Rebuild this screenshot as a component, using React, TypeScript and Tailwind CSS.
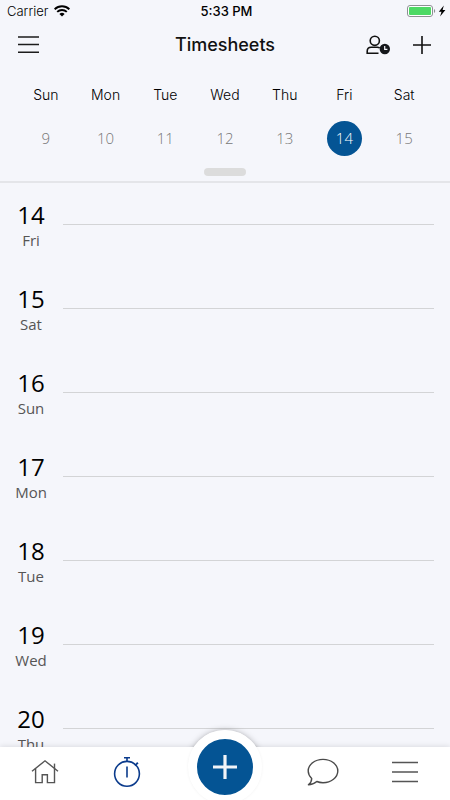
import { useState } from 'react'
import clsx from 'clsx'

const weekDays = [
  { name: 'Sun', date: 9 },
  { name: 'Mon', date: 10 },
  { name: 'Tue', date: 11 },
  { name: 'Wed', date: 12 },
  { name: 'Thu', date: 13 },
  { name: 'Fri', date: 14 },
  { name: 'Sat', date: 15 },
]

const agendaDays = [
  { name: 'Fri', date: 14 },
  { name: 'Sat', date: 15 },
  { name: 'Sun', date: 16 },
  { name: 'Mon', date: 17 },
  { name: 'Tue', date: 18 },
  { name: 'Wed', date: 19 },
  { name: 'Thu', date: 20 },
]

function StatusBar() {
  return (
    <div className="grid h-[22px] grid-cols-3 items-center pr-1 pl-[7px] text-[13px] leading-4 text-black">
      <div className="flex items-center gap-1.5">
        <span className="font-light">Carrier</span>
        <svg viewBox="0 0 16 12" className="h-3 w-4" aria-hidden="true">
          <path d="M.6 4.2a10.6 10.6 0 0 1 14.8 0" fill="none" stroke="#000" strokeWidth="2" />
          <path d="M3.2 6.9a6.9 6.9 0 0 1 9.6 0" fill="none" stroke="#000" strokeWidth="1.9" />
          <path d="M8 11.6 5.4 9a3.7 3.7 0 0 1 5.2 0z" fill="#000" />
        </svg>
      </div>
      <span className="text-center font-medium">5:33 PM</span>
      <div className="flex items-center justify-end gap-0.5">
        <svg viewBox="0 0 29 12" className="h-3 w-[29px]" aria-hidden="true">
          <rect x=".5" y=".5" width="25" height="11" rx="2.5" fill="#fff" stroke="#8d8f93" />
          <rect x="2" y="2" width="22" height="8" rx="1" fill="#4cd964" />
          <path d="M27 4c1.6.6 1.6 3.4 0 4z" fill="#8d8f93" />
        </svg>
        <svg viewBox="0 0 8 12" className="h-3 w-2" aria-hidden="true">
          <path d="M5.8.4.8 6.8h2.7L2.1 11.6 7.4 5H4.6z" fill="#000" />
        </svg>
      </div>
    </div>
  )
}

function PersonClockIcon() {
  return (
    <svg viewBox="0 0 24 20" className="h-5 w-6" fill="none" aria-hidden="true">
      <circle cx="8.8" cy="5.8" r="4.6" stroke="#111" strokeWidth="1.6" />
      <path
        d="M12.5 18.3H1.2v-2c0-2.6 1.500-4.100 3.900-4.100h6.200c1 0 1.800.2 2.400.7"
        stroke="#111"
        strokeWidth="1.6"
      />
      <circle cx="18.8" cy="14" r="5.2" fill="#15171b" />
      <path d="M18.7 11v3.3h2.7" stroke="#f5f6fb" strokeWidth="1.2" />
    </svg>
  )
}

function HomeIcon() {
  return (
    <svg viewBox="0 0 28 26" className="h-[26px] w-7" fill="none" stroke="#555" strokeWidth="1.4" aria-hidden="true">
      <path d="M1 12.3 14 1.8l13 10.5" />
      <path d="M4.6 9.600v14h6.600v-7.800h5.200v7.800h7.100V9.400" />
      <path d="M23.500 9.400V4.600" />
    </svg>
  )
}

function StopwatchIcon() {
  return (
    <svg viewBox="0 0 28 32" className="h-8 w-7" fill="none" stroke="#0b3b8c" strokeWidth="1.6" aria-hidden="true">
      <circle cx="14" cy="17.8" r="12.4" />
      <path d="M14 10.500v11M11 1.800h6M14 2v3.400M22 9.600l2.600-2.600M23.600 6.600l1.400 1.400" />
    </svg>
  )
}

function ChatIcon() {
  return (
    <svg viewBox="0 0 32 28" className="h-7 w-8" fill="none" stroke="#4a4a4a" strokeWidth="1.4" strokeLinejoin="round" aria-hidden="true">
      <path d="M4.700 20.400C2.500 18.300 1.200 15.800 1.200 13 1.200 6.600 7.800 1.400 16 1.400S30.800 6.600 30.800 13 24.200 24.700 16 24.700c-2.200 0-4.300-.4-6.200-1.200-2.600 2.200-5.200 3.200-8.400 3.200 2-1.600 3.300-3.600 3.300-6.300z" />
    </svg>
  )
}

export default function App() {
  const [selectedDate, setSelectedDate] = useState(14)

  return (
    <div className="flex h-screen flex-col overflow-hidden bg-[#f5f6fb] font-['Inter',sans-serif]">
      <header className="shrink-0 border-b-2 border-[#e4e5e9]">
        <StatusBar />
        <div className="grid h-[46px] grid-cols-3 items-center px-4">
          <button type="button" aria-label="Open menu" className="flex h-6 w-6 items-center justify-center">
            <svg viewBox="0 0 22 18" className="h-[18px] w-[22px]" stroke="#1c1c1c" strokeWidth="1.5" aria-hidden="true">
              <path d="M1 1h21M1 8.5h21M1 16.200h21" />
            </svg>
          </button>
          <h1 className="text-center text-lg font-medium text-[#111]">Timesheets</h1>
          <div className="flex items-center justify-end gap-5">
            <button type="button" aria-label="Approvals">
              <PersonClockIcon />
            </button>
            <button type="button" aria-label="Add timesheet" className="flex h-6 w-6 items-center justify-center">
              <svg viewBox="0 0 18 18" className="h-[18px] w-[18px]" stroke="#111" strokeWidth="1.6" aria-hidden="true">
                <path d="M9 0v18M0 9h18" />
              </svg>
            </button>
          </div>
        </div>

        <div className="grid grid-cols-7 px-4 pt-[17px]">
          {weekDays.map((day) => (
            <button
              key={day.date}
              type="button"
              aria-pressed={selectedDate === day.date}
              onClick={() => setSelectedDate(day.date)}
              className="flex flex-col items-center gap-4"
            >
              <span className="text-sm leading-5 font-light text-black">{day.name}</span>
              <span
                className={clsx(
                  "flex h-[35px] w-[35px] items-center justify-center rounded-full font-['Open_Sans',sans-serif] text-[15px] font-light",
                  selectedDate === day.date ? 'bg-[#045494] text-white' : 'text-[#777]',
                )}
              >
                {day.date}
              </span>
            </button>
          ))}
        </div>
        <div className="flex justify-center pt-3 pb-[5px]">
          <span className="h-2 w-[42px] rounded-full bg-[#dcdcdc]" />
        </div>
      </header>

      <main className="min-h-0 flex-1 overflow-y-auto pt-[17px] font-['Open_Sans',sans-serif] [scrollbar-width:none]">
        {agendaDays.map((day) => (
          <section key={day.date} className="flex h-[84px] px-4">
            <div className="flex w-[30px] flex-col items-center">
              <span className="text-2xl leading-[30px] text-black">{day.date}</span>
              <span className="text-[15px] leading-5 text-[#555]">{day.name}</span>
            </div>
            <div className="mt-6 ml-[17px] flex-1 border-t border-[#d3d4d6]" />
          </section>
        ))}
      </main>

      <nav className="relative flex h-[53px] shrink-0 px-1 shadow-[0_-1px_5px_rgba(0,0,0,0.10)]">
        <span className="absolute -top-[17px] left-1/2 h-[74px] w-[74px] -translate-x-1/2 rounded-full shadow-[0_0_6px_rgba(0,0,0,0.25)]" />
        <span className="absolute inset-0 bg-white" />
        <a href="#home" aria-label="Home" className="relative flex flex-1 items-center justify-center pb-1">
          <HomeIcon />
        </a>
        <a href="#timesheets" aria-label="Timesheets" className="relative flex flex-1 items-center justify-center pb-1">
          <StopwatchIcon />
        </a>
        <div className="relative w-[114px]">
          <button
            type="button"
            aria-label="Create"
            className="absolute -top-[17px] left-1/2 flex h-[74px] w-[74px] -translate-x-1/2 items-center justify-center rounded-full border-[9px] border-white bg-[#045494] shadow-[0_0_3px_rgba(0,0,0,0.06)]"
          >
            <svg viewBox="0 0 24 24" className="h-6 w-6" stroke="#f1f4f8" strokeWidth="3.2" aria-hidden="true">
              <path d="M12 0v24M0 12h24" />
            </svg>
          </button>
        </div>
        <a href="#messages" aria-label="Messages" className="relative flex flex-1 items-center justify-center pb-1">
          <ChatIcon />
        </a>
        <a href="#more" aria-label="More" className="relative flex flex-1 items-center justify-center pb-1">
          <svg viewBox="0 0 26 22" className="h-[22px] w-[26px]" stroke="#555" strokeWidth="1.7" aria-hidden="true">
            <path d="M0 1.5h26M0 11h26M0 20.5h26" />
          </svg>
        </a>
      </nav>
    </div>
  )
}
